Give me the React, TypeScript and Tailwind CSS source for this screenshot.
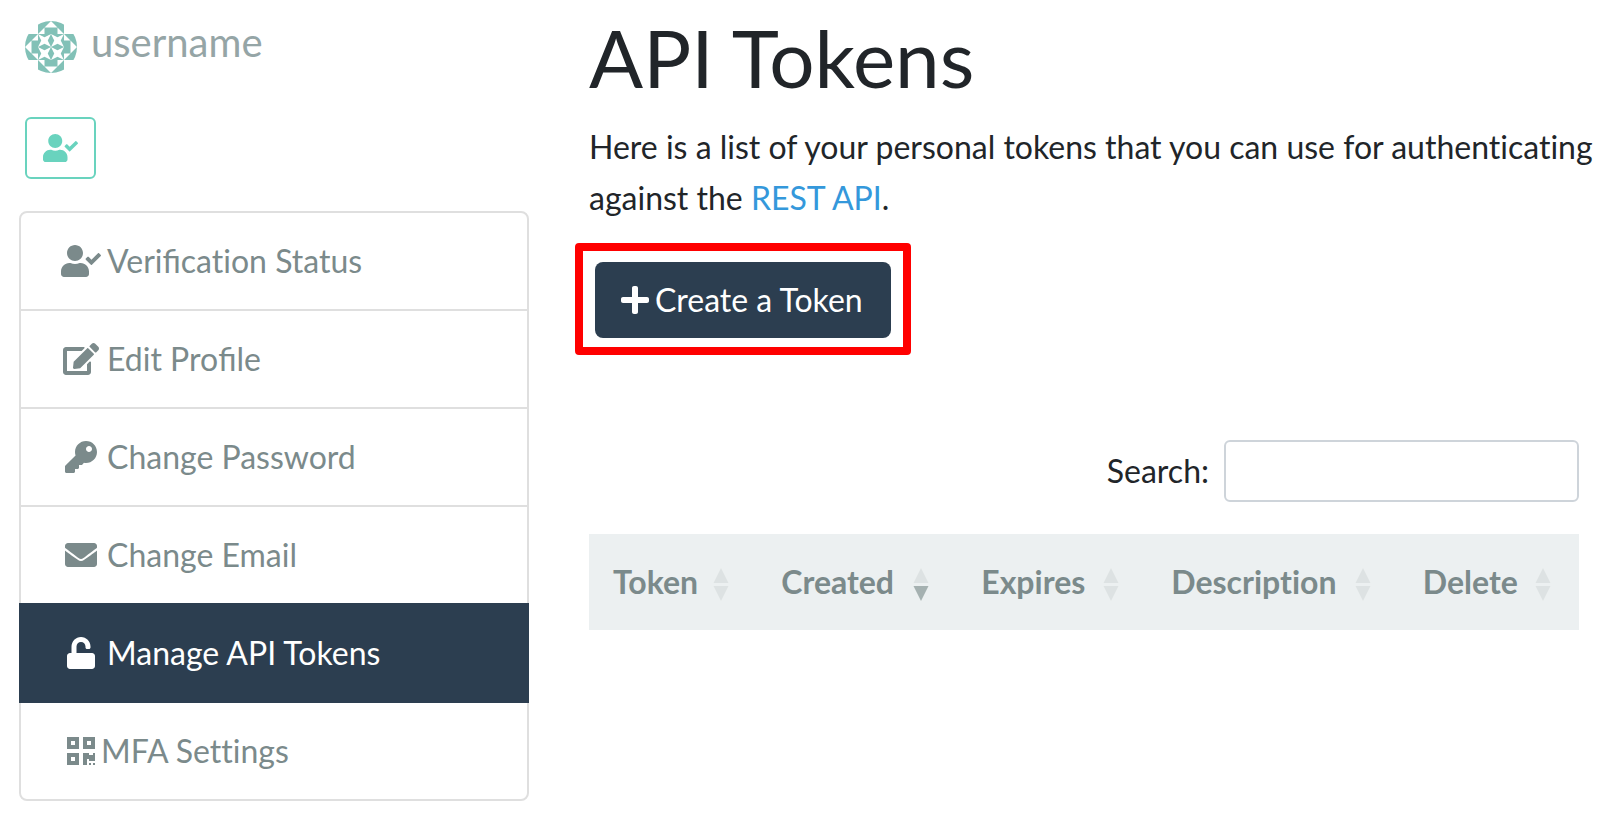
import type { ReactNode } from "react";
import { FaEdit, FaEnvelope, FaKey, FaPlus, FaQrcode, FaUnlock, FaUserCheck } from "react-icons/fa";

type NavItem = { label: ReactNode; id: string; icon: ReactNode; active?: boolean; tight?: boolean };

const fi = <span className="[font-variant-ligatures:normal]">fi</span>;

const navItems: NavItem[] = [
  { id: "verification", label: <>Veri{fi}cation Status</>, icon: <FaUserCheck className="h-8 w-10" /> },
  { id: "profile", label: <>Edit Pro{fi}le</>, icon: <FaEdit className="h-8 w-9" /> },
  { id: "password", label: "Change Password", icon: <FaKey className="size-8" /> },
  { id: "email", label: "Change Email", icon: <FaEnvelope className="size-8" /> },
  { id: "tokens", label: "Manage API Tokens", icon: <FaUnlock className="h-8 w-7" />, active: true },
  { id: "mfa", label: "MFA Settings", icon: <FaQrcode className="h-8 w-7" />, tight: true },
];

type SortOrder = "ascending" | "descending";

const columns: { label: string; width: string; sort?: SortOrder }[] = [
  { label: "Token", width: "w-[17%]" },
  { label: "Created", width: "w-[20.2%]", sort: "descending" },
  { label: "Expires", width: "w-[19.2%]" },
  { label: "Description", width: "w-[25.4%]" },
  { label: "Delete", width: "w-[18.2%]" },
];

function Avatar() {
  return (
    <svg viewBox="0 0 52 52" className="size-[52px] shrink-0" aria-hidden="true">
      <defs>
        <clipPath id="avatar-round">
          <circle cx="26" cy="26" r="26" />
        </clipPath>
      </defs>
      <g clipPath="url(#avatar-round)" fill="#82c1b7">
        {[0, 90, 180, 270].map((angle) => (
          <g key={angle} transform={`rotate(${angle} 26 26)`}>
            <path d="M13 0H26L13 13ZM39 0H26L39 13ZM19.5 6.5H32.5V13H19.5Z" />
            <path d="M13 13H26V26H13Z" />
            <path d="M13 13L19.5 16.25L26 13L22.75 19.5L26 26L19.5 22.75L13 26L16.25 19.5Z" fill="#fff" />
          </g>
        ))}
      </g>
    </svg>
  );
}

function SortArrows({ sort }: { sort?: SortOrder }) {
  return (
    <svg viewBox="0 0 16 40" className="h-10 w-4 shrink-0" aria-hidden="true">
      <path d="M8 6L15.5 21H0.5Z" fill={sort === "ascending" ? "#a5b1b1" : "#dde2e3"} />
      <path d="M8 39L15.5 24H0.5Z" fill={sort === "descending" ? "#a5b1b1" : "#dde2e3"} />
    </svg>
  );
}

function Sidebar() {
  return (
    <aside>
      <div className="flex items-start gap-[14px] pt-[21px] pl-1.5">
        <Avatar />
        <span className="text-[40px] leading-[42px] text-[#95a5a6]">username</span>
      </div>
      <button
        type="button"
        disabled
        aria-label="Verified user"
        className="mt-11 ml-1.5 flex h-[62px] items-center rounded-md border-2 border-[#69d3be] px-4 text-[#69d3be]"
      >
        <FaUserCheck className="h-7 w-[35px]" />
      </button>
      <nav className="mt-8 rounded-lg border-2 border-[#dfdfdf]">
        {navItems.map(({ id, label, icon, active, tight }, index) => (
          <a
            key={id}
            href="#"
            aria-current={active ? "page" : undefined}
            className={[
              "flex items-center py-6",
              tight ? "" : "gap-1.5",
              active ? "-mx-0.5 -mb-0.5 border-t-2 border-[#2c3e50] bg-[#2c3e50] px-[42px] pb-[26px] text-white" : "px-10 text-[#7b8a8b]",
              !active && index > 0 ? "border-t-2" : "",
              navItems[index - 1]?.active ? "border-transparent" : active ? "" : "border-[#dfdfdf]",
            ].join(" ")}
          >
            <span className="flex w-10 shrink-0 justify-center">{icon}</span>
            <span>{label}</span>
          </a>
        ))}
      </nav>
    </aside>
  );
}

export default function App() {
  return (
    <div className="grid grid-cols-[510px_minmax(0,1fr)] gap-[60px] bg-white pr-1 pl-[19px] font-['Lato',sans-serif] text-[32px] leading-[48px] text-[#212529] [font-variant-ligatures:none]">
      <Sidebar />
      <main className="pt-[9px]">
        <h1 className="text-[80px] leading-[96px]">API Tokens</h1>
        <p className="mt-4 leading-[51px]">
          Here is a list of your personal tokens that you can use for authenticating against the{" "}
          <a href="#" className="text-[#3498db]">REST API</a>.
        </p>
        <div className="relative mt-[39px] ml-1.5 w-fit">
          <button
            type="button"
            className="flex h-[76px] items-center gap-1.5 rounded-lg bg-[#2c3e50] pr-7 pl-[26px] text-white"
          >
            <FaPlus className="h-8 w-7" />
            Create a Token
          </button>
          <div className="pointer-events-none absolute -inset-x-5 -top-[19px] -bottom-[17px] rounded border-8 border-[#ff0000]" />
        </div>
        <div className="mt-[102px] mr-[17px] flex items-center justify-end gap-[15px]">
          <label htmlFor="token-search">Search:</label>
          <input
            id="token-search"
            type="search"
            className="h-[62px] w-[355px] rounded-md border-2 border-[#ced4da] px-4 text-[28px] outline-none"
          />
        </div>
        <div className="mt-8 mr-[17px]">
          <table className="w-full">
            <thead className="bg-[#ecf0f1] text-[#7b8a8b]">
              <tr>
                {columns.map(({ label, width, sort }) => (
                  <th key={label} scope="col" aria-sort={sort} className={`${width} py-6 pr-7 pl-6 text-left font-bold`}>
                    <div className="flex items-center justify-between gap-2">
                      {label}
                      <SortArrows sort={sort} />
                    </div>
                  </th>
                ))}
              </tr>
            </thead>
          </table>
        </div>
      </main>
    </div>
  );
}
